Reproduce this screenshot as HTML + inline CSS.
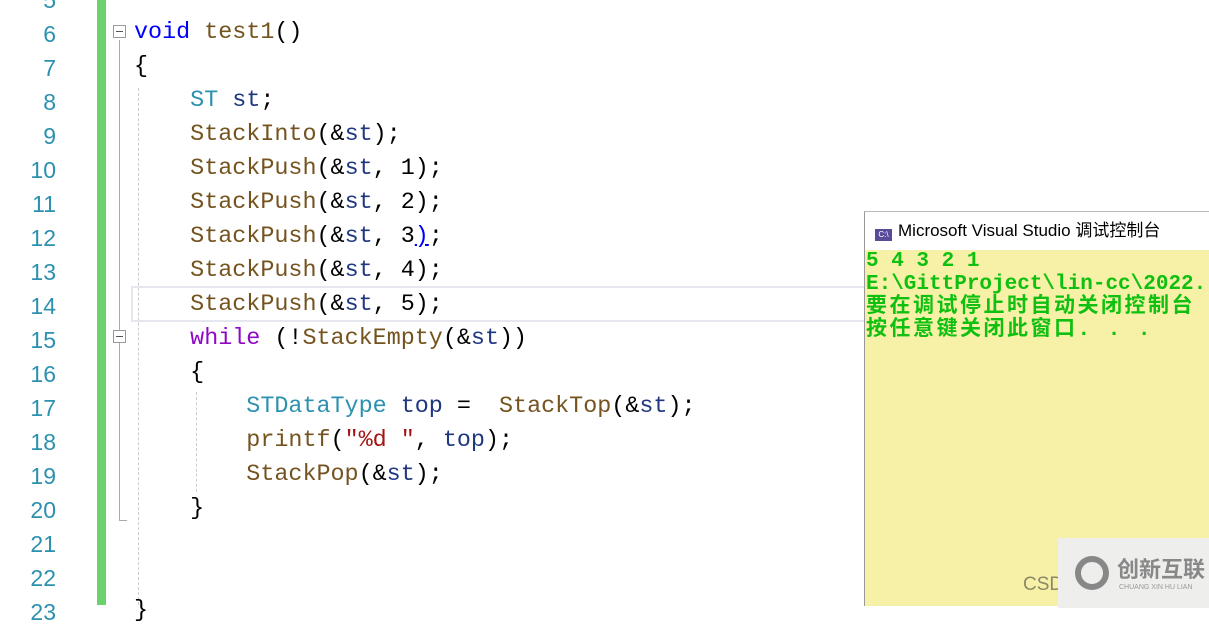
<!DOCTYPE html>
<html><head><meta charset="utf-8"><style>
body{margin:0;width:1209px;height:605px;overflow:hidden;background:#fff;position:relative;font-family:"Liberation Mono",monospace}
.ln{position:absolute;left:0;width:56px;text-align:right;color:#2b91af;font-size:23px;font-family:"Liberation Sans",sans-serif}
.code{position:absolute;left:134px;font-size:23.4px;white-space:pre;color:#000}
.k{color:#0000ff}.f{color:#74531f}.t{color:#2b91af}.v{color:#1f377f}.s{color:#a31515}.p{color:#8f08c4}
.g{position:absolute;left:97px;top:0;width:9px;height:605px;background:#6cd36c}
.box{position:absolute;width:11px;height:11px;border:1px solid #999;background:#fff}
.box:after{content:"";position:absolute;left:2px;top:5px;width:7px;height:1px;background:#555}
</style></head><body>
<div class="g"></div>
<div style="position:absolute;left:119px;top:40px;width:1px;height:480px;background:#aaa"></div>
<div style="position:absolute;left:119px;top:520px;width:8px;height:1px;background:#aaa"></div>
<div style="position:absolute;left:138px;top:88px;width:0;height:517px;border-left:1px dashed #ccc"></div>
<div style="position:absolute;left:196px;top:392px;width:0;height:100px;border-left:1px dashed #ccc"></div>
<div class="box" style="left:113px;top:25px"></div>
<div class="box" style="left:113px;top:330px"></div>
<div style="position:absolute;left:131px;top:286px;width:740px;height:32px;border:2px solid #e6e6ee;border-right:none"></div>
<div id="lines"></div>
<script>
var L=[["5",""],["6",'<span class="k">void</span> <span class="f">test1</span>()'],["7","{"],["8",'    <span class="t">ST</span> <span class="v">st</span>;'],["9",'    <span class="f">StackInto</span>(&amp;<span class="v">st</span>);'],
["10",'    <span class="f">StackPush</span>(&amp;<span class="v">st</span>, 1);'],["11",'    <span class="f">StackPush</span>(&amp;<span class="v">st</span>, 2);'],["12",'    <span class="f">StackPush</span>(&amp;<span class="v">st</span>, 3<span style="text-decoration:underline;color:#00f">)</span>;'],["13",'    <span class="f">StackPush</span>(&amp;<span class="v">st</span>, 4);'],["14",'    <span class="f">StackPush</span>(&amp;<span class="v">st</span>, 5);'],
["15",'    <span class="p">while</span> (!<span class="f">StackEmpty</span>(&amp;<span class="v">st</span>))'],["16","    {"],["17",'        <span class="t">STDataType</span> <span class="v">top</span> =  <span class="f">StackTop</span>(&amp;<span class="v">st</span>);'],["18",'        <span class="f">printf</span>(<span class="s">"%d "</span>, <span class="v">top</span>);'],["19",'        <span class="f">StackPop</span>(&amp;<span class="v">st</span>);'],["20","    }"],["21",""],["22",""],["23","}"]];
var h="";L.forEach(function(a,i){var y=-14+i*34;h+='<div class="ln" style="top:'+(y+1)+'px">'+a[0]+'</div><div class="code" style="top:'+y+'px">'+a[1]+'</div>';});
document.getElementById("lines").innerHTML=h;
</script>
<div style="position:absolute;left:864px;top:211px;width:345px;height:394px;border-left:1px solid #999;border-top:1px solid #bbb;background:#f7f0a7">
<div style="height:38px;background:#fff;font-family:'Liberation Sans','Noto Sans CJK SC',sans-serif;font-size:17px;line-height:38px;color:#000;white-space:nowrap"><span style="display:inline-block;width:17px;height:12px;background:#5a4b9a;color:#fff;font-size:8px;line-height:12px;text-align:center;margin:0 6px 0 10px;vertical-align:-1px">C:\</span>Microsoft Visual Studio 调试控制台</div>
<div style="color:#10c010;font-weight:bold;font-size:21px;line-height:23px;white-space:pre;padding-left:1px;font-family:'Liberation Mono','Noto Sans CJK SC',monospace">5 4 3 2 1
E:\GittProject\lin-cc\2022.
<span style="letter-spacing:2.5px">要在调试停止时自动关闭控制台</span>
<span style="letter-spacing:2.5px">按任意键关闭此窗口. . .</span></div>
<div style="position:absolute;left:158px;top:362px;color:#8a8a6a;font-family:'Liberation Sans',sans-serif;font-size:19px">CSD</div>
<div style="position:absolute;left:193px;top:326px;width:160px;height:70px;background:#eeeeec"></div>
<div style="position:absolute;left:210px;top:344px;width:34px;height:34px;border-radius:50%;border:6px solid #888;box-sizing:border-box"></div>
<div style="position:absolute;left:252px;top:340px;color:#888;font-family:'Noto Sans CJK SC',sans-serif;font-size:22px;font-weight:bold">创新互联</div>
<div style="position:absolute;left:254px;top:372px;color:#999;font-family:'Liberation Sans',sans-serif;font-size:7px">CHUANG XIN HU LIAN</div>
</div>
</body></html>
